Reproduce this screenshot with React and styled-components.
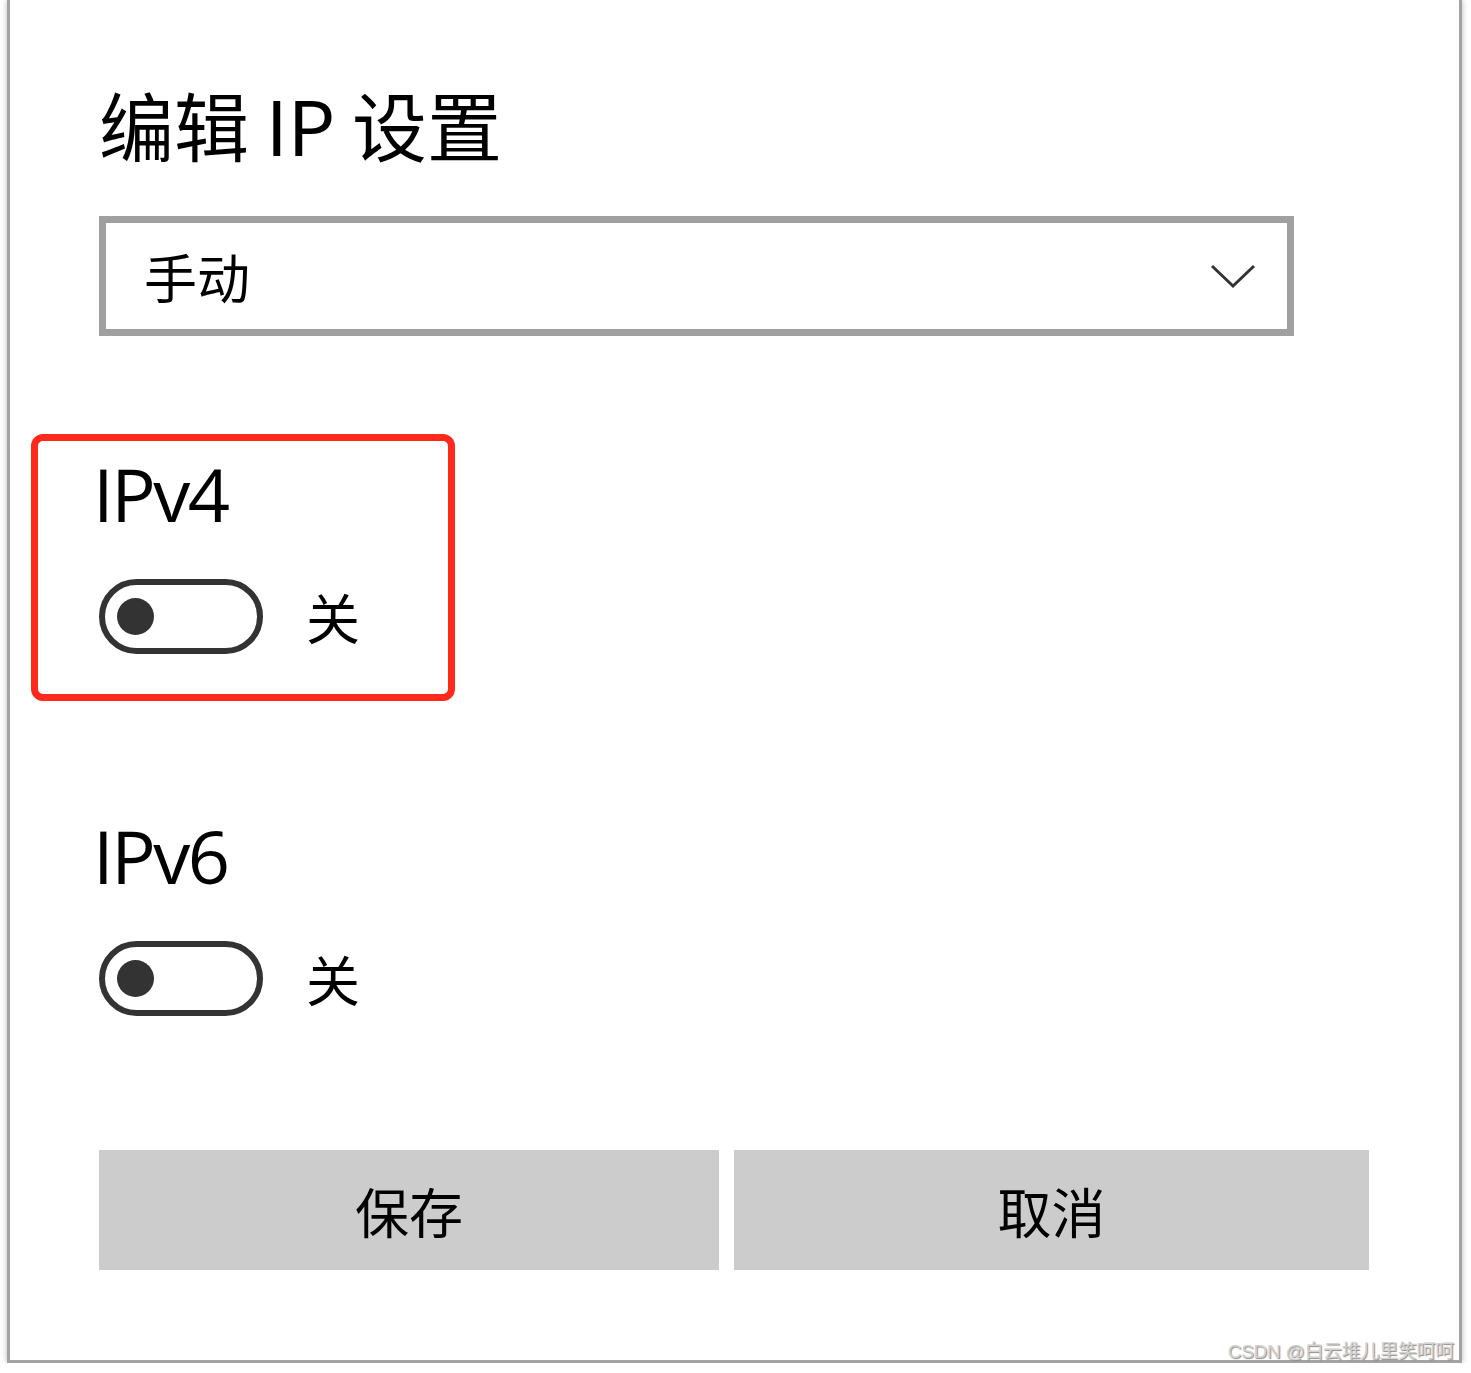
import React from "react";
import styled, { createGlobalStyle } from "styled-components";

const GlobalStyle = createGlobalStyle`
  body {
    margin: 0;
    background: #ffffff;
    font-family: "Open Sans", "Noto Sans CJK SC", sans-serif;
    color: #000;
  }
`;

const Window = styled.div`
  position: relative;
  box-sizing: border-box;
  margin-left: 7px;
  width: 1455px;
  height: 1363px;
  background: #fff;
  border: 3px solid #a3a3a3;
  border-top: none;
  box-shadow: 0 0 6px rgba(0, 0, 0, 0.28);
  padding: 86px 0 0 89px;
`;

const Title = styled.h1`
  margin: 0;
  font-family: "Noto Sans CJK SC", sans-serif;
  font-weight: 400;
  font-size: 75px;
  line-height: 76px;
  color: #000;
`;

const Select = styled.div`
  box-sizing: border-box;
  margin-top: 54px;
  width: 1195px;
  height: 120px;
  border: 7px solid #a0a0a0;
  display: flex;
  align-items: center;
  justify-content: space-between;
  padding: 0 31px 0 38px;
`;

const SelectText = styled.span`
  font-family: "Noto Sans CJK SC", sans-serif;
  font-size: 53px;
  line-height: 1;
  color: #000;
`;

const Section = styled.section`
  box-sizing: border-box;
  width: 424px;
  height: 267px;
  margin-top: ${(p) => p.$gap}px;
  margin-left: -68px;
  padding: 16px 0 40px 61px;
  border: 7px solid ${(p) => (p.$highlight ? "#ff2a1c" : "transparent")};
  border-radius: 12px;
`;

const Heading = styled.h2`
  margin: 0 0 0 -6px;
  font-family: "Open Sans", sans-serif;
  font-weight: 400;
  font-size: 74px;
  line-height: 74px;
  letter-spacing: -2.5px;
  color: #000;
`;

const ToggleRow = styled.div`
  margin-top: 48px;
  display: flex;
  align-items: center;
  gap: 43px;
`;

const Toggle = styled.div`
  box-sizing: border-box;
  width: 164px;
  height: 75px;
  border: 6px solid #333;
  border-radius: 38px;
  display: flex;
  align-items: center;
  padding-left: 12px;
`;

const Knob = styled.span`
  width: 37px;
  height: 37px;
  border-radius: 50%;
  background: #333;
`;

const ToggleLabel = styled.span`
  font-family: "Noto Sans CJK SC", sans-serif;
  font-size: 54px;
  line-height: 1;
  color: #000;
`;

const Buttons = styled.div`
  margin-top: 87px;
  display: grid;
  grid-template-columns: 620px 635px;
  gap: 15px;
`;

const Button = styled.button`
  height: 120px;
  border: none;
  background: #cccccc;
  font-family: "Noto Sans CJK SC", sans-serif;
  font-size: 54px;
  color: #000;
  padding: 0;
`;

const Watermark = styled.div`
  position: absolute;
  right: 5px;
  bottom: -3px;
  font-family: "Liberation Sans", "Noto Sans CJK SC", sans-serif;
  font-size: 19px;
  letter-spacing: -0.3px;
  color: #d2d2d2;
  text-shadow: 1px 1px 1px #8a8a8a;
  white-space: nowrap;
`;

function Chevron() {
  return (
    <svg width="46" height="26" viewBox="0 0 46 26">
      <polyline points="2,3 23,23 44,3" fill="none" stroke="#333" strokeWidth="3" />
    </svg>
  );
}

function Switch({ label }) {
  return (
    <ToggleRow>
      <Toggle>
        <Knob />
      </Toggle>
      <ToggleLabel>{label}</ToggleLabel>
    </ToggleRow>
  );
}

export default function App() {
  return (
    <>
      <GlobalStyle />
      <Window>
        <Title>编辑 IP 设置</Title>
        <Select>
          <SelectText>手动</SelectText>
          <Chevron />
        </Select>
        <Section $highlight $gap={98}>
          <Heading>IPv4</Heading>
          <Switch label="关" />
        </Section>
        <Section $gap={95}>
          <Heading>IPv6</Heading>
          <Switch label="关" />
        </Section>
        <Buttons>
          <Button>保存</Button>
          <Button>取消</Button>
        </Buttons>
        <Watermark>CSDN @白云堆儿里笑呵呵</Watermark>
      </Window>
    </>
  );
}
